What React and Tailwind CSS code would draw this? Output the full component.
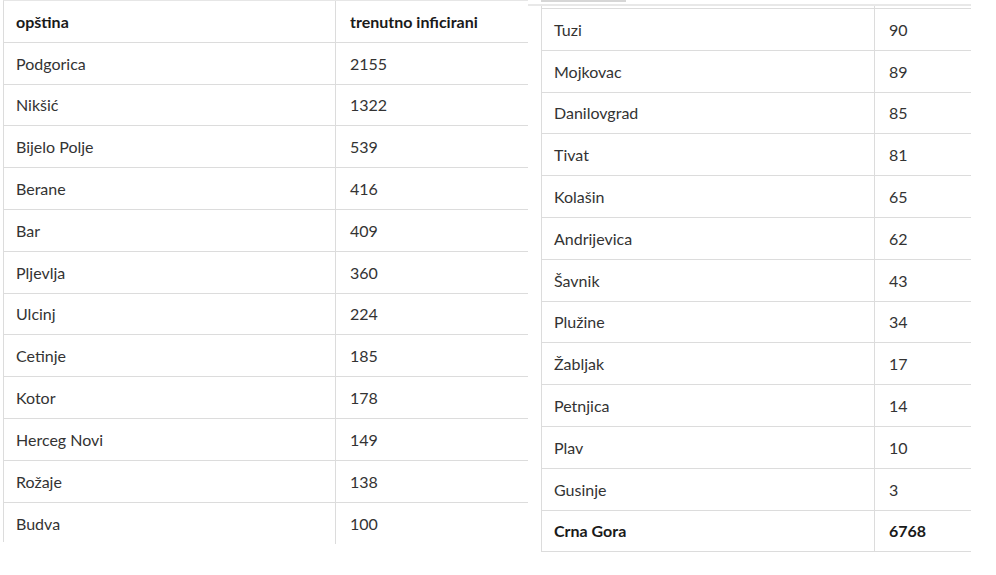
import React from "react";

const left = [
  ["Podgorica", "2155"],
  ["Nikšić", "1322"],
  ["Bijelo Polje", "539"],
  ["Berane", "416"],
  ["Bar", "409"],
  ["Pljevlja", "360"],
  ["Ulcinj", "224"],
  ["Cetinje", "185"],
  ["Kotor", "178"],
  ["Herceg Novi", "149"],
  ["Rožaje", "138"],
];

const right = [
  ["Tuzi", "90"],
  ["Mojkovac", "89"],
  ["Danilovgrad", "85"],
  ["Tivat", "81"],
  ["Kolašin", "65"],
  ["Andrijevica", "62"],
  ["Šavnik", "43"],
  ["Plužine", "34"],
  ["Žabljak", "17"],
  ["Petnjica", "14"],
  ["Plav", "10"],
  ["Gusinje", "3"],
];

function Row({ a, b, bold, firstW, last }) {
  return (
    <div
      className={`flex h-[41.8px] ${last ? "" : "border-b border-[#dcdcdc]"} ${bold ? "font-bold text-[#1a1a1a]" : ""}`}
    >
      <div
        className="flex items-center border-r border-[#dcdcdc] pl-[12px] pt-px"
        style={{ width: firstW }}
      >
        {a}
      </div>
      <div className="flex items-center pl-[14px] pt-px flex-1">{b}</div>
    </div>
  );
}

export default function App() {
  return (
    <div
      className="w-[996px] h-[575px] bg-white flex text-[16px] text-[#333]"
      style={{ fontFamily: "Lato, 'Noto Sans', sans-serif" }}
    >
      <div className="ml-[3px] w-[525px] h-[542px] border-l border-t border-[#e6e6e6] border-l-[#dcdcdc]">
        <Row a="opština" b="trenutno inficirani" bold firstW="332px" />
        {left.map(([a, b]) => (
          <Row key={a} a={a} b={b} firstW="332px" />
        ))}
        <Row a="Budva" b="100" firstW="332px" last />
      </div>
      <div className="w-[443px] flex flex-col">
        <div className="h-[4px] relative">
          <div className="absolute left-[13px] top-0 w-[85px] h-[2px] bg-[#d6d6d6]" />
        </div>
        <div className="border-t-2 border-[#e8e8e8]" />
        <div className="ml-[13px] w-[430px] border-l border-[#dcdcdc]">
          <div className="flex h-[3px] border-b border-[#dcdcdc]">
            <div className="w-[333px] border-r border-[#dcdcdc]" />
          </div>
          {right.map(([a, b]) => (
            <Row key={a} a={a} b={b} firstW="333px" />
          ))}
          <Row a="Crna Gora" b="6768" bold firstW="333px" />
        </div>
      </div>
    </div>
  );
}
